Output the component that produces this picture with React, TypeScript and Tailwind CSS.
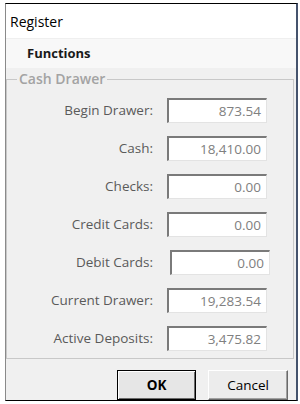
import React from 'react'

const rows: { label: string; value: string; shift?: boolean }[] = [
  { label: 'Begin Drawer:', value: '873.54' },
  { label: 'Cash:', value: '18,410.00' },
  { label: 'Checks:', value: '0.00' },
  { label: 'Credit Cards:', value: '0.00' },
  { label: 'Debit Cards:', value: '0.00', shift: true },
  { label: 'Current Drawer:', value: '19,283.54' },
  { label: 'Active Deposits:', value: '3,475.82' },
]

function Field({ value, shift }: { value: string; shift?: boolean }) {
  return (
    <div
      className={`h-[25px] w-[100px] bg-white border-t-2 border-l-2 border-b border-r border-t-[#7a7a7a] border-l-[#7a7a7a] border-b-[#e3e3e3] border-r-[#e3e3e3] flex items-center justify-end pr-[5px] text-[13.5px] text-[#808080] ${shift ? 'ml-[3px]' : ''}`}
    >
      {value}
    </div>
  )
}

export default function App() {
  return (
    <div
      className="w-[300px] h-[404px] bg-white pt-[3px] pl-[5px] pr-[2px] pb-[3px]"
      style={{ fontFamily: '"Segoe UI", "Open Sans", "Noto Sans", sans-serif' }}
    >
      <div className="h-full flex flex-col border-t border-t-black border-l border-l-[#8a8a8a] border-r-2 border-r-[#45536d] border-b border-b-black">
        <div className="h-[34px] bg-white flex items-center pl-[4px] text-[14px] text-black">
          Register
        </div>
        <div className="h-[30px] bg-[#f8f8f8] border-t border-t-[#efefef] flex items-center pl-[21px] text-[13px] font-bold text-[#1a1a1a]">
          Functions
        </div>
        <div className="flex-1 bg-[#f0f0f0] flex flex-col">
          <fieldset className="mt-[3px] mr-[2px] h-[288px] border border-[#c8c8c8] pl-0">
            <legend className="ml-[10px] px-[2px] text-[14px] font-semibold leading-[16px] text-[#a3a3a3]">
              Cash Drawer
            </legend>
            <div className="mt-[11px] flex flex-col gap-[13px]">
              {rows.map((r) => (
                <div key={r.label} className="flex items-center">
                  <div className="w-[146px] text-right text-[13.5px] text-[#5a5a5a]">{r.label}</div>
                  <div className="ml-[14px]">
                    <Field value={r.value} shift={r.shift} />
                  </div>
                </div>
              ))}
            </div>
          </fieldset>
          <div className="flex justify-end gap-[12px] mr-[8px] mt-[11px]">
            <button className="h-[30px] w-[79px] bg-[#e6e6e6] border border-black shadow-[inset_1px_1px_0_#ffffff,inset_-1px_-1px_0_#6a6a6a] text-[13.5px] font-bold text-black">
              OK
            </button>
            <button className="h-[30px] w-[80px] bg-[#ececec] border border-t-white border-l-white border-b-[#6a6a6a] border-r-[#6a6a6a] shadow-[inset_-1px_-1px_0_#a0a0a0] text-[13.5px] text-black">
              Cancel
            </button>
          </div>
        </div>
      </div>
    </div>
  )
}
